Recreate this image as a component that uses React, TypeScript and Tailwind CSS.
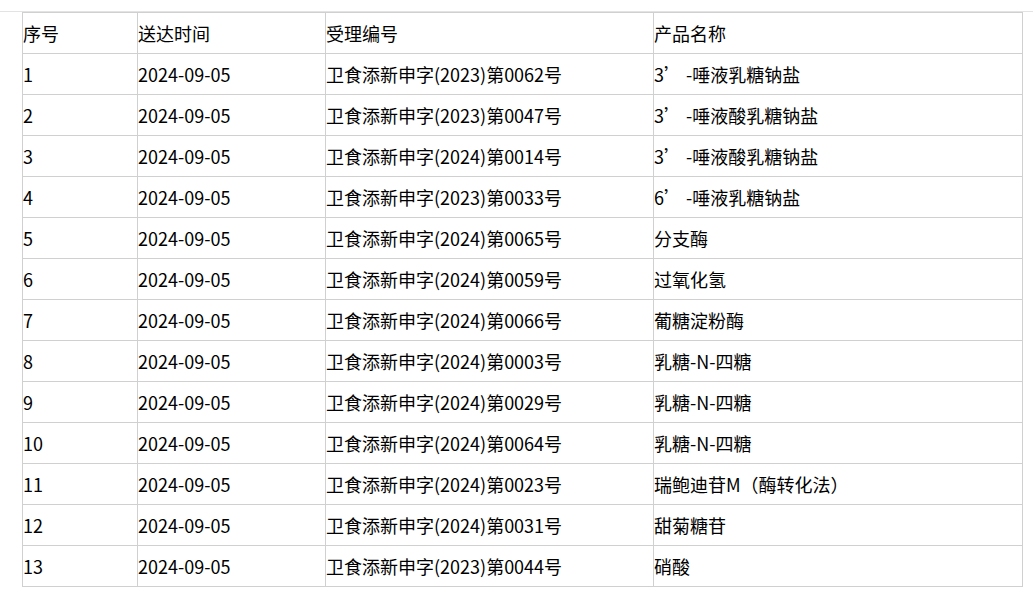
const rows: [string, string, string][] = [
  ['2024-09-05', '卫食添新申字(2023)第0062号', '3’ -唾液乳糖钠盐'],
  ['2024-09-05', '卫食添新申字(2023)第0047号', '3’ -唾液酸乳糖钠盐'],
  ['2024-09-05', '卫食添新申字(2024)第0014号', '3’ -唾液酸乳糖钠盐'],
  ['2024-09-05', '卫食添新申字(2023)第0033号', '6’ -唾液乳糖钠盐'],
  ['2024-09-05', '卫食添新申字(2024)第0065号', '分支酶'],
  ['2024-09-05', '卫食添新申字(2024)第0059号', '过氧化氢'],
  ['2024-09-05', '卫食添新申字(2024)第0066号', '葡糖淀粉酶'],
  ['2024-09-05', '卫食添新申字(2024)第0003号', '乳糖-N-四糖'],
  ['2024-09-05', '卫食添新申字(2024)第0029号', '乳糖-N-四糖'],
  ['2024-09-05', '卫食添新申字(2024)第0064号', '乳糖-N-四糖'],
  ['2024-09-05', '卫食添新申字(2024)第0023号', '瑞鲍迪苷M（酶转化法）'],
  ['2024-09-05', '卫食添新申字(2024)第0031号', '甜菊糖苷'],
  ['2024-09-05', '卫食添新申字(2023)第0044号', '硝酸'],
];

const cell = 'border border-[#d0d0d0] pl-0 align-middle whitespace-pre';

export default function App() {
  return (
    <div
      lang="zh-CN"
      className="min-h-[596px] bg-white pt-[11px] text-[18px] text-black"
      style={{ fontFamily: '"Noto Sans CJK SC", "Noto Sans", sans-serif' }}
    >
      <div className="border-t border-[#e3e3e3]">
        <table className="ml-[22px] w-[1000px] table-fixed border-collapse leading-none">
          <colgroup>
            <col className="w-[115px]" />
            <col className="w-[188px]" />
            <col className="w-[328px]" />
            <col className="w-[369px]" />
          </colgroup>
          <thead>
            <tr className="h-[41px]">
              <td className={cell}>序号</td>
              <td className={cell}>送达时间</td>
              <td className={cell}>受理编号</td>
              <td className={cell}>产品名称</td>
            </tr>
          </thead>
          <tbody>
            {rows.map((r, i) => (
              <tr key={i} className="h-[41px]">
                <td className={cell}>{i + 1}</td>
                <td className={cell}>{r[0]}</td>
                <td className={cell}>{r[1]}</td>
                <td className={cell}>{r[2]}</td>
              </tr>
            ))}
          </tbody>
        </table>
      </div>
    </div>
  );
}
